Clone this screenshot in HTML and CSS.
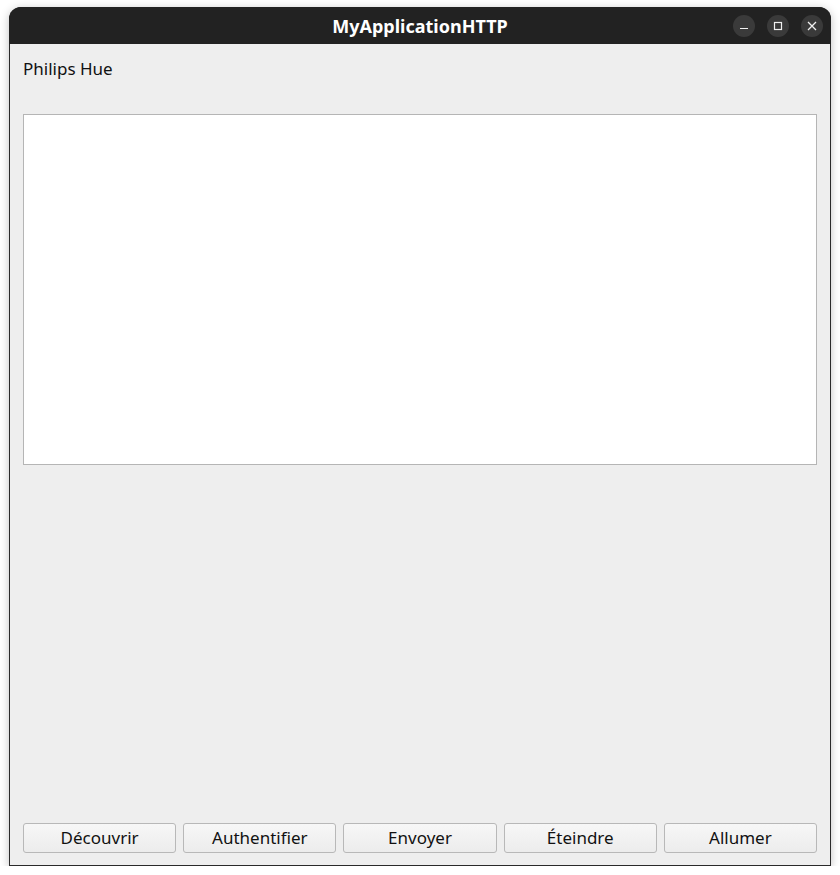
FILE: index.html
```html
<!DOCTYPE html>
<html>
<head>
<meta charset="utf-8">
<link rel="stylesheet" href="styles.css">
</head>
<body>
<div class="window">
  <div class="titlebar">
    <div class="title">MyApplicationHTTP</div>
    <div class="controls">
      <span class="ctl"><svg width="10" height="10" viewBox="0 0 10 10"><path d="M1 7.5H9" stroke="#f0f0f0" stroke-width="1.2"/></svg></span>
      <span class="ctl"><svg width="10" height="10" viewBox="0 0 10 10"><rect x="1.5" y="1.5" width="7" height="7" fill="none" stroke="#f0f0f0" stroke-width="1.2"/></svg></span>
      <span class="ctl"><svg width="10" height="10" viewBox="0 0 10 10"><path d="M1 1L9 9M9 1L1 9" stroke="#f0f0f0" stroke-width="1.3"/></svg></span>
    </div>
  </div>
  <div class="content">
    <div class="label">Philips Hue</div>
    <div class="textarea"></div>
    <div class="spacer"></div>
    <div class="buttons">
      <button class="btn">Découvrir</button>
      <button class="btn">Authentifier</button>
      <button class="btn">Envoyer</button>
      <button class="btn">Éteindre</button>
      <button class="btn">Allumer</button>
    </div>
  </div>
</div>
</body>
</html>
```
FILE: styles.css
```css
html, body {
  margin: 0;
  padding: 0;
  background: #ffffff;
  font-family: "Noto Sans", "DejaVu Sans", sans-serif;
}
.window {
  margin: 7px 0 0 9px;
  width: 822px;
  height: 859px;
  box-sizing: border-box;
  display: flex;
  flex-direction: column;
  border-radius: 12px 12px 0 0;
  background: #2a2a2a;
  box-shadow: 0 2px 10px rgba(0,0,0,0.25);
  overflow: hidden;
}
.titlebar {
  height: 37px;
  flex: none;
  background: #222222;
  position: relative;
  display: flex;
  align-items: center;
  justify-content: center;
}
.title {
  color: #ffffff;
  font-weight: bold;
  font-size: 18px;
}
.controls {
  position: absolute;
  right: 8px;
  top: 8px;
  display: flex;
  gap: 12px;
}
.ctl {
  width: 22px;
  height: 22px;
  border-radius: 50%;
  background: #3a3a3a;
  display: flex;
  align-items: center;
  justify-content: center;
}
.content {
  flex: 1;
  margin: 0 1px 1px 1px;
  background: #eeeeee;
  padding: 13px 13px 12px 13px;
  display: flex;
  flex-direction: column;
}
.label {
  font-size: 17px;
  line-height: 23px;
  color: #111111;
}
.textarea {
  margin-top: 34px;
  height: 351px;
  box-sizing: border-box;
  background: #ffffff;
  border: 1px solid #b5b5b5;
}
.spacer { flex: 1; }
.buttons {
  display: flex;
  gap: 7px;
}
.btn {
  flex: 1;
  height: 30px;
  font-family: inherit;
  font-size: 17px;
  color: #111111;
  border: 1px solid #b8b8b8;
  border-radius: 3px;
  background: linear-gradient(#f7f7f7, #ececec);
  padding: 0 0 2px 0;
}
```
